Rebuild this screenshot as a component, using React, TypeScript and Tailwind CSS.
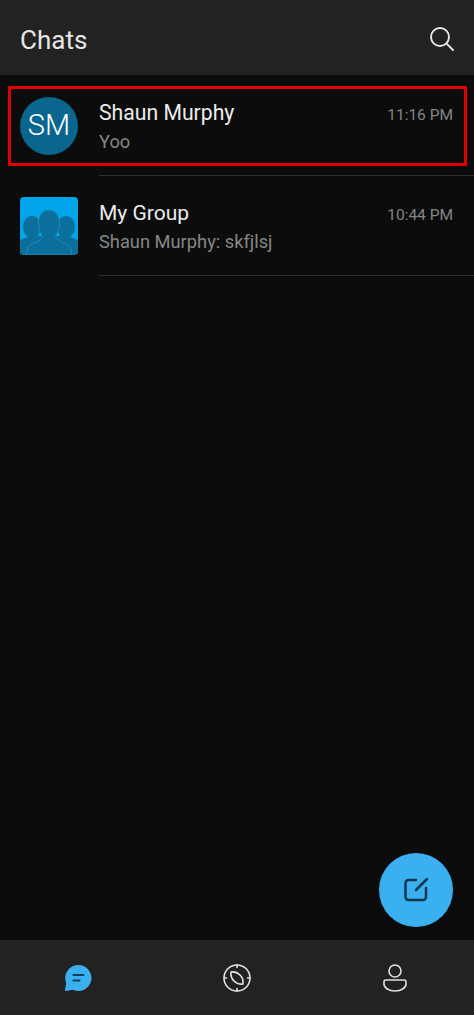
import React from "react";

function Row({ name, msg, time, avatar, top, nameClass }: { name: string; msg: string; time: string; avatar: React.ReactNode; top: string; nameClass: string }) {
  return (
    <div className={`flex ${top} pl-5`}>
      <div className="shrink-0 w-[58px] h-[59px]">{avatar}</div>
      <div className="ml-[21px] flex-1 border-b border-[#2e2e2e] h-[79px] pr-[21px]">
        <div className="flex items-baseline justify-between h-[32px] pt-[1px]">
          <span className={`${nameClass} leading-[30px] text-[#ececec]`}>{name}</span>
          <span className="text-[15.5px] leading-[30px] text-[#858585]">{time}</span>
        </div>
        <div className="text-[18.3px] leading-[26px] text-[#868686]">{msg}</div>
      </div>
    </div>
  );
}

export default function App() {
  return (
    <div className="relative w-[474px] h-[1015px] bg-[#0c0c0c] flex flex-col overflow-hidden font-['Roboto',sans-serif]">
      <header className="h-[75px] shrink-0 bg-[#222222] flex items-center justify-between pl-[20px] pr-[20px]">
        <span className="text-[26px] text-[#e6e6e6] leading-[80px] mt-[4px]">Chats</span>
        <svg width="24" height="24" viewBox="0 0 24 24" fill="none" stroke="#e6e6e6" strokeWidth="1.9" strokeLinecap="round" className="mt-[2px]">
          <circle cx="10" cy="10" r="9" />
          <path d="M16.6 16.6 L23 23" />
        </svg>
      </header>

      <main className="flex-1">
        <Row
          top="mt-[22px]"
          name="Shaun Murphy"
          nameClass="text-[21.2px]"
          msg="Yoo"
          time="11:16 PM"
          avatar={
            <div className="w-[58px] h-[58px] rounded-full bg-[#0a668e] flex items-center justify-center text-[29px] font-light text-[#ffffff]">
              SM
            </div>
          }
        />
        <Row
          top="mt-[21px]"
          name="My Group"
          nameClass="text-[21px]"
          msg="Shaun Murphy: skfjlsj"
          time="10:44 PM"
          avatar={
            <div className="w-[58px] h-[58px] rounded-[4px] bg-[#00a4e8] overflow-hidden">
              <svg width="58" height="58" viewBox="0 0 58 58">
                <ellipse cx="12" cy="30" rx="9" ry="11" fill="#0b6f9c" />
                <ellipse cx="46" cy="30" rx="9" ry="11" fill="#0b6f9c" />
                <path d="M0 58 L0 43 C4 41 8 40 12 39 L46 39 C50 40 54 41 58 43 L58 58 Z" fill="#0b6f9c" />
                <path d="M29 13 C36 13 39.5 19 39.5 26 C39.5 32 37 37 35.5 40 C37 44 46 46 50 50 L52 58 L6 58 L8 50 C12 46 21 44 22.5 40 C21 37 18.5 32 18.5 26 C18.5 19 22 13 29 13 Z" fill="#0b6f9c" stroke="#1e94c6" strokeWidth="0.8" />
              </svg>
            </div>
          }
        />
      </main>

      <button className="absolute left-[379px] top-[853px] w-[74px] h-[74px] rounded-full bg-[#3ab0f0] flex items-center justify-center">
        <svg width="26" height="26" viewBox="0 0 26 26" fill="none" stroke="#0f3550" strokeWidth="2.5" strokeLinecap="round" strokeLinejoin="round">
          <path d="M13 3 H5.5 A3 3 0 0 0 2.5 6 V20 A3 3 0 0 0 5.5 23 H20 A3 3 0 0 0 23 20 V11" />
          <path d="M13 13 L24 2" />
        </svg>
      </button>

      <nav className="h-[75px] shrink-0 bg-[#222222] grid grid-cols-3 items-center">
        <div className="flex justify-center">
          <svg width="28" height="28" viewBox="0 0 28 28" className="ml-[-2px]">
            <path d="M14.5 1 A13 13 0 1 1 9 25.8 L2 27 A1 1 0 0 1 1 26 L2.2 19 A13 13 0 0 1 14.5 1 Z" fill="#3ab0f0" />
            <path d="M9.5 11 H19.5 M9.5 16.5 H15.5" stroke="#173e58" strokeWidth="2.2" strokeLinecap="round" />
          </svg>
        </div>
        <div className="flex justify-center">
          <svg width="28" height="28" viewBox="0 0 28 28" fill="none" stroke="#e0e0e0" strokeWidth="1.6" strokeLinecap="round" strokeLinejoin="round">
            <circle cx="14" cy="14" r="13" />
            <path d="M14 1 V3.5 M14 24.5 V27 M1 14 H3.5 M24.5 14 H27" />
            <path d="M8 8 C15 7 21 13 20 20 C13 21 7 15 8 8 Z" />
          </svg>
        </div>
        <div className="flex justify-center">
          <svg width="24" height="28" viewBox="0 0 24 28" fill="none" stroke="#e0e0e0" strokeWidth="1.6">
            <circle cx="12" cy="7" r="6" />
            <path d="M3 16 H21 A2 2 0 0 1 23 18 V20 C23 24 18 27 12 27 C6 27 1 24 1 20 V18 A2 2 0 0 1 3 16 Z" />
          </svg>
        </div>
      </nav>

      <div className="absolute left-[8px] top-[86px] w-[459px] h-[80px] border-[3px] border-[#e00000]" />
    </div>
  );
}
